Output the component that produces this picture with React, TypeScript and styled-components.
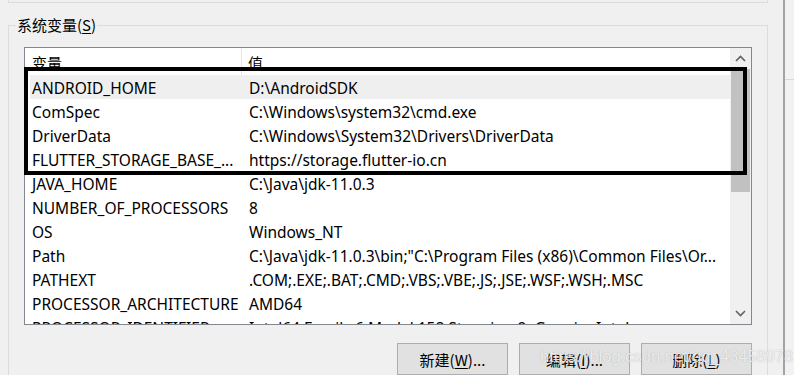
import * as React from "react";
import styled, { createGlobalStyle } from "styled-components";

type EnvVar = { name: string; value: string; selected?: boolean };

const vars: EnvVar[] = [
  { name: "ANDROID_HOME", value: "D:\\AndroidSDK", selected: true },
  { name: "ComSpec", value: "C:\\Windows\\system32\\cmd.exe" },
  { name: "DriverData", value: "C:\\Windows\\System32\\Drivers\\DriverData" },
  { name: "FLUTTER_STORAGE_BASE_...", value: "https://storage.flutter-io.cn" },
  { name: "JAVA_HOME", value: "C:\\Java\\jdk-11.0.3" },
  { name: "NUMBER_OF_PROCESSORS", value: "8" },
  { name: "OS", value: "Windows_NT" },
  {
    name: "Path",
    value: 'C:\\Java\\jdk-11.0.3\\bin;"C:\\Program Files (x86)\\Common Files\\Or...',
  },
  { name: "PATHEXT", value: ".COM;.EXE;.BAT;.CMD;.VBS;.VBE;.JS;.JSE;.WSF;.WSH;.MSC" },
  { name: "PROCESSOR_ARCHITECTURE", value: "AMD64" },
  { name: "PROCESSOR_IDENTIFIER", value: "Intel64 Family 6 Model 158 Stepping 9, GenuineIntel" },
];

const App: React.FC = () => {
  return (
    <>
      <GlobalStyle />
      <Page>
        <Main>
          <PrevGroup />
          <GroupBox>
            <Legend>
              系统变量(<u>S</u>)
            </Legend>
            <ListView>
              <ListContent>
                <Header>
                  <HeaderCell $first>变量</HeaderCell>
                  <HeaderCell>值</HeaderCell>
                </Header>
                {vars.map((v) => (
                  <Row key={v.name} $selected={v.selected}>
                    <NameCell>{v.name}</NameCell>
                    <ValueCell>{v.value}</ValueCell>
                  </Row>
                ))}
              </ListContent>
              <ScrollBar>
                <ArrowButton>
                  <Chevron dir="up" />
                </ArrowButton>
                <Thumb />
                <Track />
                <ArrowButton>
                  <Chevron dir="down" />
                </ArrowButton>
              </ScrollBar>
              <Highlight />
            </ListView>
            <ButtonRow>
              <Button>
                新建(<u>W</u>)...
              </Button>
              <Button>
                编辑(<u>I</u>)...
              </Button>
              <Button>
                删除(<u>L</u>)
              </Button>
            </ButtonRow>
          </GroupBox>
        </Main>
        <WindowEdge />
        <Outside>
          <OutsideLine />
        </Outside>
        <Watermark>https://blog.csdn.net/qq_43458978</Watermark>
      </Page>
    </>
  );
};

export default App;

const Chevron: React.FC<{ dir: "up" | "down" }> = ({ dir }) => (
  <svg width="11" height="7" viewBox="0 0 11 7">
    <polyline
      points={dir === "up" ? "1,6 5.5,1.5 10,6" : "1,1 5.5,5.5 10,1"}
      fill="none"
      stroke="#606060"
      strokeWidth="1.6"
    />
  </svg>
);

const GlobalStyle = createGlobalStyle`
  body {
    margin: 0;
    background: #f0f0f0;
    font-family: "Noto Sans", "Noto Sans CJK SC", sans-serif;
  }
`;

const Page = styled.div`
  position: relative;
  width: 794px;
  height: 375px;
  overflow: hidden;
  display: flex;
  background: #f0f0f0;
  color: #000;
`;

const Main = styled.div`
  width: 783px;
  padding: 0 15px 0 8px;
  box-sizing: border-box;
  display: flex;
  flex-direction: column;
`;

const PrevGroup = styled.div`
  height: 3px;
  box-sizing: border-box;
  border: 1px solid #dcdcdc;
  border-top: none;
`;

const GroupBox = styled.fieldset`
  margin: 12px 0 0;
  padding: 12px 15px 0;
  min-width: 0;
  border: 1px solid #dcdcdc;
  border-bottom: none;
  flex: 1;
`;

const Legend = styled.legend`
  margin-left: -8px;
  padding: 0 1px;
  font-family: "Noto Sans CJK SC", sans-serif;
  font-size: 15px;
  line-height: 20px;
  u {
    text-underline-offset: 2px;
  }
`;

const ListView = styled.div`
  position: relative;
  height: 278px;
  box-sizing: border-box;
  border: 1px solid #828790;
  background: #fff;
  display: flex;
`;

const ListContent = styled.div`
  flex: 1;
  overflow: hidden;
  font-size: 15.5px;
`;

const Header = styled.div`
  height: 27px;
  display: grid;
  grid-template-columns: 217px 1fr;
`;

const HeaderCell = styled.div<{ $first?: boolean }>`
  box-sizing: border-box;
  padding-left: ${(p) => (p.$first ? "7px" : "6px")};
  padding-top: 3px;
  line-height: 24px;
  border-right: ${(p) => (p.$first ? "1px solid #e5e5e5" : "none")};
  font-family: "Noto Sans CJK SC", sans-serif;
  font-size: 15px;
`;

const Row = styled.div<{ $selected?: boolean }>`
  height: 24px;
  margin-left: 5px;
  display: grid;
  grid-template-columns: 212px 1fr;
  overflow: hidden;
  line-height: 24px;
  white-space: nowrap;
  background: ${(p) => (p.$selected ? "#efefef" : "transparent")};
`;

const NameCell = styled.div`
  padding: 1px 0 0 2px;
  overflow: hidden;
`;

const ValueCell = styled.div`
  padding: 1px 0 0 7px;
  overflow: hidden;
`;

const ScrollBar = styled.div`
  width: 21px;
  display: flex;
  flex-direction: column;
  background: #f0f0f0;
`;

const ArrowButton = styled.div`
  height: 21px;
  flex-shrink: 0;
  display: flex;
  align-items: center;
  justify-content: center;
`;

const Thumb = styled.div`
  height: 123px;
  flex-shrink: 0;
  margin: 0 1px;
  background: #c1c1c1;
`;

const Track = styled.div`
  flex: 1;
`;

const Highlight = styled.div`
  position: absolute;
  left: -1px;
  top: 19px;
  width: 723px;
  height: 108px;
  box-sizing: border-box;
  border: 4px solid #000;
  pointer-events: none;
`;

const ButtonRow = styled.div`
  margin-top: 18px;
  display: flex;
  justify-content: flex-end;
  gap: 11px;
`;

const Button = styled.button`
  width: 111px;
  height: 32px;
  box-sizing: border-box;
  border: 1px solid #adadad;
  background: #e1e1e1;
  font-family: "Noto Sans CJK SC", sans-serif;
  font-size: 15px;
  color: #000;
  padding: 0;
  u {
    text-underline-offset: 2px;
  }
`;

const WindowEdge = styled.div`
  width: 2px;
  background: #a3a3a3;
`;

const Outside = styled.div`
  flex: 1;
  background: #f2f2f2;
  padding-top: 79px;
`;

const OutsideLine = styled.div`
  height: 1px;
  background: #d8d8d8;
`;

const Watermark = styled.div`
  position: absolute;
  left: 540px;
  top: 347px;
  font-family: "Liberation Sans", Arial, sans-serif;
  font-size: 16.5px;
  color: rgba(255, 255, 255, 0.8);
  text-shadow: 0 0 1px rgba(110, 110, 110, 0.55);
  white-space: nowrap;
  pointer-events: none;
`;
